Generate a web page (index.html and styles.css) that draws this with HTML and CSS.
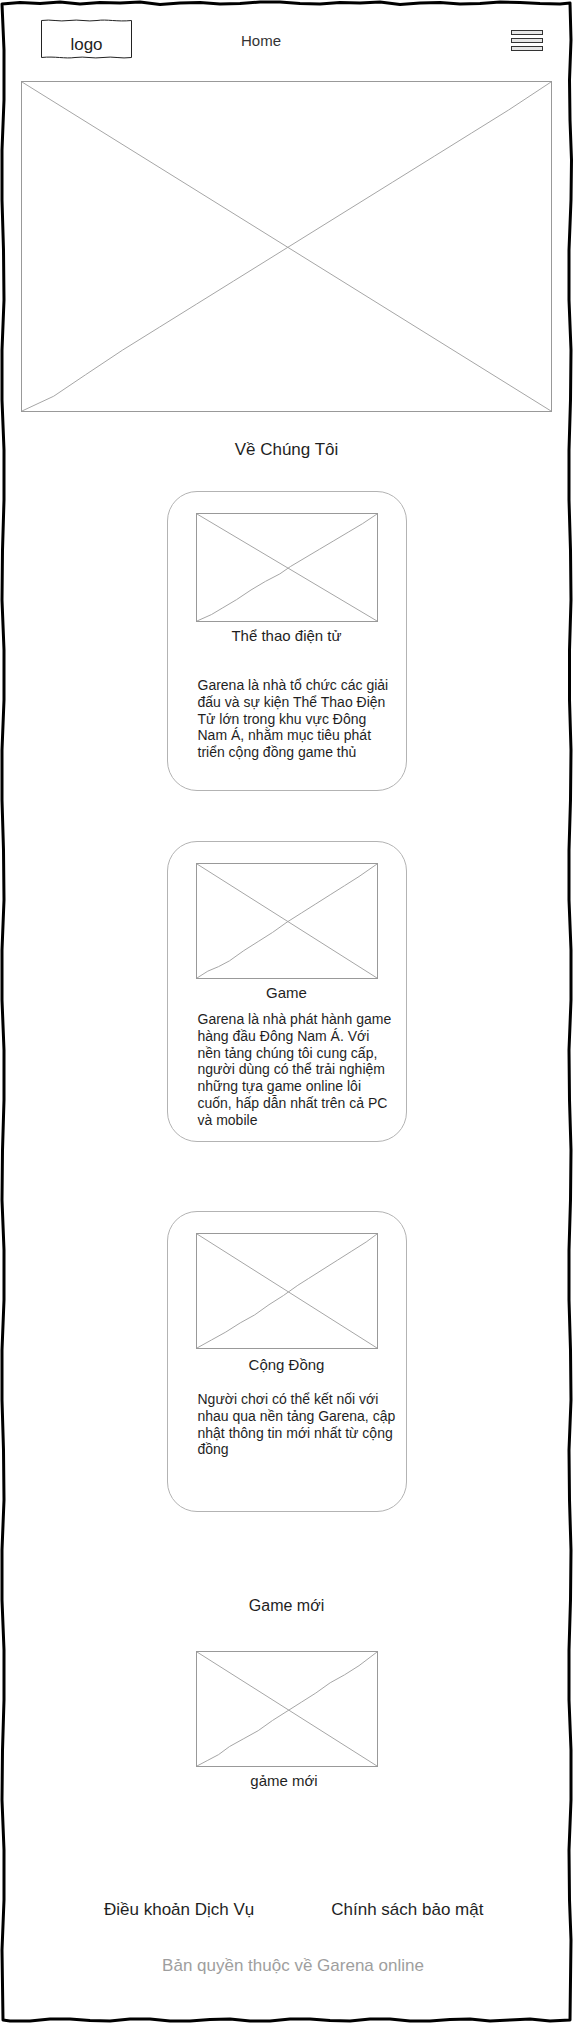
FILE: index.html
```html
<!DOCTYPE html>
<html>
<head>
  <meta charset="utf-8">
  <title>Garena</title>
  <link rel="stylesheet" href="styles.css">
</head>
<body>
  <div class="page">
    <!-- sketchy outer frame -->
    <svg class="frame" viewBox="0 0 573 2023" preserveAspectRatio="none">
      <path d="M2,4 L20,2.5 L40,3.5 L60,2 L80,4 L100,2.5 L120,3 L140,2 L160,4.5 L180,3 L200,2.5 L220,4 L240,3.5 L260,2 L280,2 L300,3.5 L320,4 L340,2.5 L360,3 L380,2 L400,4.5 L420,3 L440,2.5 L460,4 L480,3.5 L500,2 L520,2.5 L540,3.5 L560,4 L570,3
               L571,40 L569.5,80 L570,120 L571.5,160 L571,200 L569,250 L569,300 L571,350 L570.5,400 L569,450 L569,500 L570.5,550 L571,600 L569.5,650 L569.5,700 L571,750 L570.5,800 L569,850 L569,900 L571,950 L571,1000 L569,1050 L569.5,1100 L571,1150 L570.5,1200 L569,1250 L569,1300 L570.5,1350 L571,1400 L569,1450 L569.5,1500 L571,1550 L570.5,1600 L569,1650 L569,1700 L571,1750 L571,1800 L569,1850 L569.5,1900 L571,1940 L570.5,1980 L570,2020
               L550,2021 L530,2019 L510,2020 L490,2021 L470,2019 L450,2019.5 L430,2021 L410,2021 L390,2019 L370,2019 L350,2021 L330,2020.5 L310,2019 L290,2019 L270,2021 L250,2021 L230,2019 L210,2019.5 L190,2021 L170,2021 L150,2019 L130,2019 L110,2021 L90,2020.5 L70,2019 L50,2019 L30,2021 L10,2021 L3,2020
               L2,1950 L4,1900 L4,1850 L2,1800 L2.5,1750 L4,1700 L4,1650 L2,1600 L2,1550 L4,1500 L3.5,1450 L2,1400 L2,1350 L4,1300 L4,1250 L2,1200 L2.5,1150 L4,1100 L4,1050 L2,1000 L2,950 L4,900 L3.5,850 L2,800 L2,750 L4,700 L4,650 L2,600 L2.5,550 L4,500 L4,450 L2,400 L2,350 L4,300 L3.5,250 L2,200 L2,150 L4,100 L4,50 Z"/>
    </svg>

    <!-- HEADER -->
    <div class="header">
      <svg class="logo" width="91" height="40" viewBox="0 0 91 40">
        <path class="logo-box" d="M0.5,1.5 C10,0 18,3 28,1.5 C38,0 46,3 56,1.5 C66,0 76,3 90.5,1.5 L90.5,38.5 C80,40 72,37 62,38.5 C52,40 44,37 34,38.5 C24,40 14,37 0.5,38.5 Z"/>
        <text x="45.5" y="31" text-anchor="middle">logo</text>
      </svg>
      <a class="nav-home">Home</a>
      <div class="menu-icon">
        <span></span>
        <span></span>
        <span></span>
      </div>
    </div>

    <!-- HERO -->
    <div class="ph hero">
      <svg viewBox="0 0 100 100" preserveAspectRatio="none">
        <path d="M0,0 L100,100"/>
        <path d="M0,100 L6,95.5 L12,89 L19,81.5 L26,74.5 L33,67.5 L40,60.5 L48,52.5 L55,45.5 L62,38.5 L70,30.5 L78,22.5 L85,15.5 L92,8.5 L100,0"/>
      </svg>
    </div>

    <!-- ABOUT -->
    <h2 class="section-title about-title">Về Chúng Tôi</h2>

    <div class="card card-esports">
      <div class="ph card-ph">
        <svg viewBox="0 0 100 100" preserveAspectRatio="none">
          <path d="M0,0 L100,100"/>
          <path d="M0,100 L8,94 L14,88 L22,80 L30,71 L38,63 L46,56 L52,49 L60,41 L68,33 L76,25 L84,17 L92,9 L100,0"/>
        </svg>
      </div>
      <h3 class="card-title">Thể thao điện tử</h3>
      <p class="card-text">Garena là nhà tổ chức các giải<br>đấu và sự kiện Thể Thao Điện<br>Tử lớn trong khu vực Đông<br>Nam Á, nhằm mục tiêu phát<br>triển cộng đồng game thủ</p>
    </div>

    <div class="card card-game">
      <div class="ph card-ph">
        <svg viewBox="0 0 100 100" preserveAspectRatio="none">
          <path d="M0,0 L100,100"/>
          <path d="M0,100 L6,94 L12,90 L18,85 L26,76 L34,68 L42,60 L50,51 L58,43 L66,35 L74,27 L82,19 L90,11 L100,0"/>
        </svg>
      </div>
      <h3 class="card-title">Game</h3>
      <p class="card-text">Garena là nhà phát hành game<br>hàng đầu Đông Nam Á. Với<br>nền tảng chúng tôi cung cấp,<br>người dùng có thể trải nghiệm<br>những tựa game online lôi<br>cuốn, hấp dẫn nhất trên cả PC<br>và mobile</p>
    </div>

    <div class="card card-community">
      <div class="ph card-ph">
        <svg viewBox="0 0 100 100" preserveAspectRatio="none">
          <path d="M0,100 L8,93 L16,86 L24,78 L32,71 L40,62 L48,54 L56,45 L62,39 L70,31 L78,23 L86,15 L94,7 L100,0"/>
          <path d="M0,0 L100,100"/>
        </svg>
      </div>
      <h3 class="card-title">Cộng Đồng</h3>
      <p class="card-text">Người chơi có thể kết nối với<br>nhau qua nền tảng Garena, cập<br>nhật thông tin mới nhất từ cộng<br>đồng</p>
    </div>

    <!-- NEW GAMES -->
    <h2 class="section-title new-title">Game mới</h2>
    <div class="ph new-ph">
      <svg viewBox="0 0 100 100" preserveAspectRatio="none">
        <path d="M0,0 L100,100"/>
        <path d="M0,100 L6,95 L12,90 L18,83 L26,76 L34,69 L42,60 L50,52 L58,44 L66,36 L74,27 L82,20 L90,12 L100,0"/>
      </svg>
    </div>
    <p class="new-caption">gảme mới</p>

    <!-- FOOTER -->
    <div class="footer-links">
      <a>Điều khoản Dịch Vụ</a>
      <a>Chính sách bảo mật</a>
    </div>
    <p class="copyright">Bản quyền thuộc về Garena online</p>
  </div>
</body>
</html>
```

FILE: styles.css
```css
body {
  margin: 0;
  background: #fff;
  font-family: "Liberation Sans", Arial, sans-serif;
  color: #1f1f1f;
}
h2, h3, p { margin: 0; font-weight: normal; }
a { color: inherit; text-decoration: none; }

.page {
  position: relative;
  width: 573px;
  height: 2023px;
  overflow: hidden;
}

/* hand drawn frame around the whole page */
.frame {
  position: absolute;
  top: 0;
  left: 0;
  width: 573px;
  height: 2023px;
  pointer-events: none;
}
.frame path {
  fill: none;
  stroke: #000;
  stroke-width: 3;
  stroke-linejoin: round;
}

/* header */
.header {
  display: flex;
  align-items: center;
  padding: 19px 30px 0 41px;
  height: 40px;
}
.logo { display: block; }
.logo-box { fill: #fff; stroke: #222; stroke-width: 1; }
.logo text {
  font-family: "Liberation Sans", Arial, sans-serif;
  font-size: 17px;
  fill: #1f1f1f;
}
.nav-home {
  margin-left: 109px;
  margin-top: 3px;
  font-size: 15px;
  color: #333;
}
.menu-icon {
  margin-left: auto;
  margin-top: 3px;
  width: 32px;
  display: flex;
  flex-direction: column;
  gap: 3px;
}
.menu-icon span {
  display: block;
  box-sizing: border-box;
  height: 5px;
  border: 1.5px solid #333;
  background: #e6e6e6;
}

/* image placeholders */
.ph {
  box-sizing: border-box;
  border: 1px solid #999;
  background: #fff;
}
.ph svg { display: block; width: 100%; height: 100%; }
.ph path {
  fill: none;
  stroke: #a6a6a6;
  stroke-width: 1;
  vector-effect: non-scaling-stroke;
}

.hero {
  margin: 22px 0 0 21px;
  width: 531px;
  height: 331px;
}

.section-title {
  text-align: center;
  font-size: 17px;
  line-height: 20px;
}
.about-title { margin-top: 28px; }
.new-title { margin-top: 84px; font-size: 16px; line-height: 19px; }

/* about cards */
.card {
  box-sizing: border-box;
  width: 240px;
  margin: 0 auto;
  padding: 21px 28px 0;
  border: 1px solid #b3b3b3;
  border-radius: 30px;
}
.card-ph { width: 182px; height: 116px; }
.card-title {
  text-align: center;
  font-size: 15px;
  line-height: 18px;
}
.card-text {
  padding-left: 2px;
  margin-right: -20px;
  font-size: 14px;
  line-height: 16.8px;
  white-space: nowrap;
}

.card-esports { margin-top: 31px; height: 300px; }
.card-esports .card-ph { height: 109px; }
.card-esports .card-title { margin-top: 5px; }
.card-esports .card-text { margin-top: 32px; }

.card-game { margin-top: 50px; height: 301px; }
.card-game .card-title { margin-top: 5px; }
.card-game .card-text { margin-top: 9px; }

.card-community { margin-top: 69px; height: 301px; }
.card-community .card-title { margin-top: 7px; }
.card-community .card-text { margin-top: 17px; }

/* new games */
.new-ph {
  margin: 36px auto 0;
  width: 182px;
  height: 116px;
}
.new-caption {
  margin-top: 5px;
  text-align: center;
  font-size: 15px;
  line-height: 18px;
  padding-right: 5px;
}

/* footer */
.footer-links {
  display: flex;
  gap: 77px;
  margin-top: 110px;
  padding-left: 104px;
  font-size: 17px;
  line-height: 20px;
}
.copyright {
  margin-top: 36px;
  padding-left: 13px;
  text-align: center;
  font-size: 17px;
  line-height: 20px;
  color: #9e9e9e;
}
```
